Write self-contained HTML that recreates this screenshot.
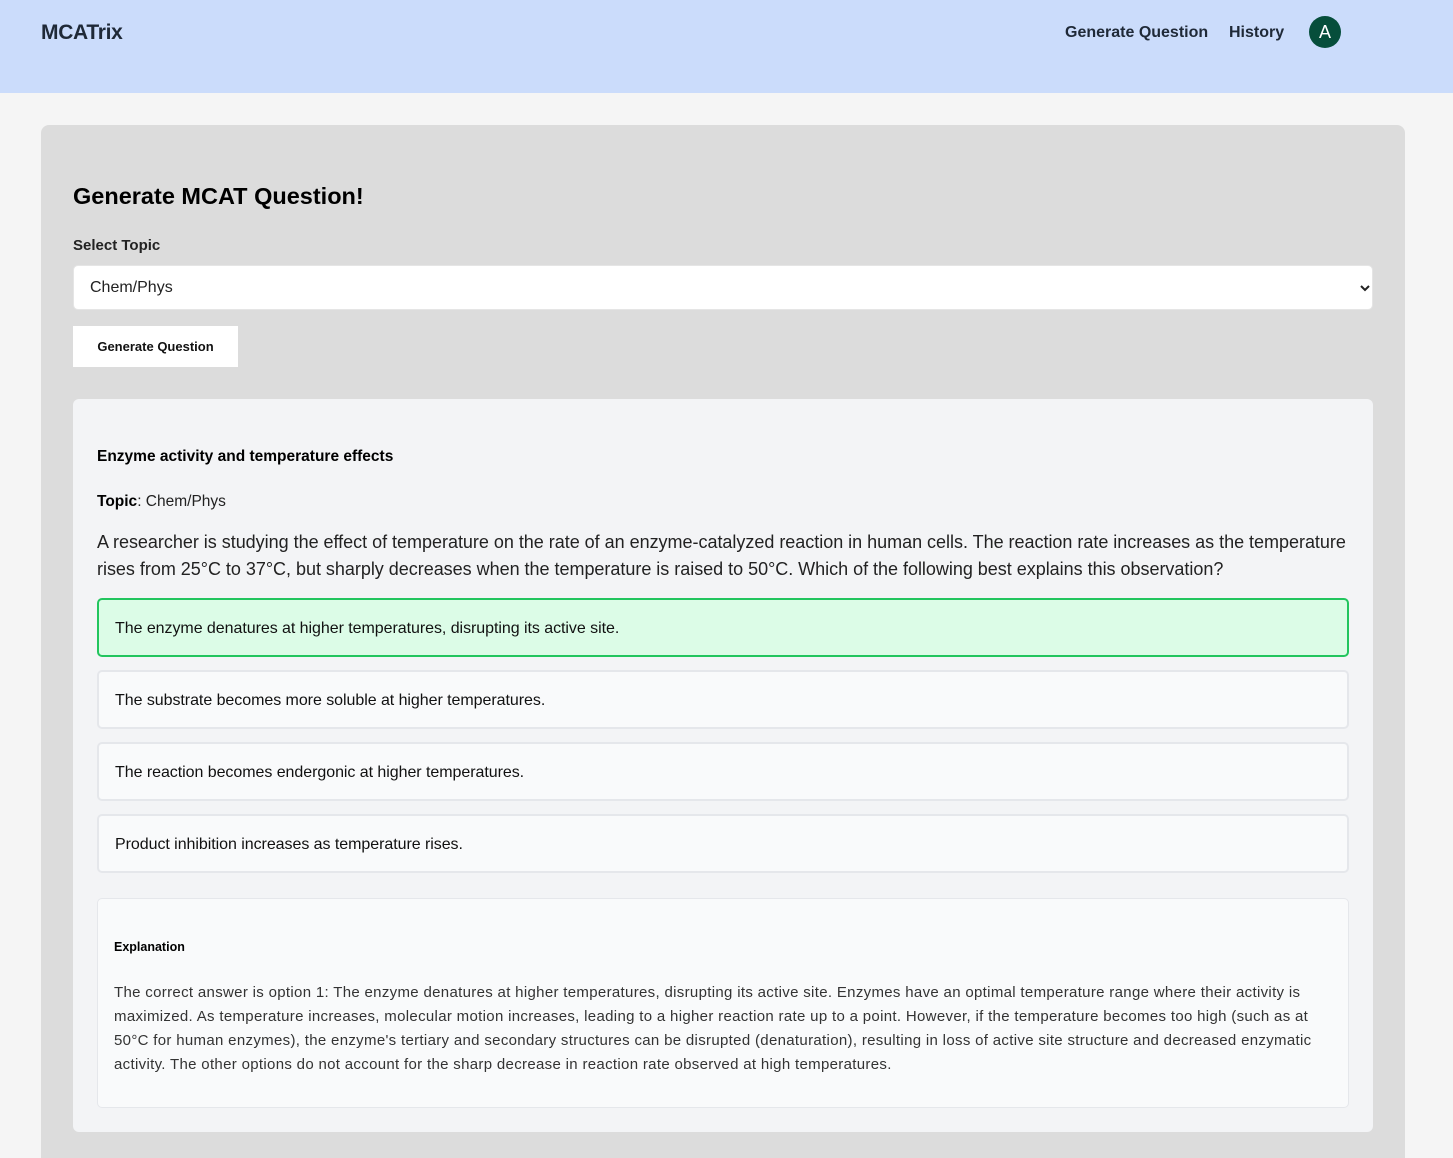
<!DOCTYPE html>
<html><head><meta charset="utf-8"><style>
*{box-sizing:border-box;margin:0;padding:0}
html,body{width:1453px;height:1158px;overflow:hidden}
body{background:#f5f5f5;font-family:"Liberation Sans",sans-serif;color:#111;position:relative}
.hdr{position:absolute;left:0;top:0;width:1453px;height:93px;background:#cbdcfb}
.logo{position:absolute;left:41px;top:21px;font-size:21px;font-weight:bold;color:#1f2937;letter-spacing:-0.3px}
.nav{position:absolute;top:24px;font-size:16px;font-weight:bold;color:#1f2937}
.av{position:absolute;left:1309px;top:16px;width:32px;height:32px;border-radius:50%;background:#064e3b;color:#fff;font-size:18px;text-align:center;line-height:32px}
.card{position:absolute;left:41px;top:125px;width:1364px;height:1033px;background:#dcdcdc;border-radius:8px 8px 0 0}
.abs{position:absolute;white-space:nowrap}
.sel{position:absolute;left:73px;top:265px;width:1300px;height:45px;background:#fff;border-radius:5px;border:1px solid #e5e5e5}
.btn{position:absolute;left:73px;top:326px;width:165px;height:41px;background:#fff;font-size:13px;font-weight:bold;text-align:center;line-height:42px}
.inner{position:absolute;left:73px;top:399px;width:1300px;height:733px;background:#f3f4f6;border-radius:6px}
.opt{position:absolute;left:97px;width:1252px;height:59px;background:#f9fafb;border:2px solid #e5e7eb;border-radius:5px;font-size:16px;padding-left:16px;line-height:58px;white-space:nowrap;letter-spacing:-0.05px}
.ok{background:#dcfce7;border-color:#22c55e}
.exp{position:absolute;left:97px;top:898px;width:1252px;height:210px;background:#f9fafb;border:1px solid #e5e7eb;border-radius:5px}
</style></head><body>
<div class="hdr">
<div class="logo">MCATrix</div>
<div class="nav" style="left:1065px">Generate Question</div>
<div class="nav" style="left:1229px">History</div>
<div class="av">A</div>
</div>
<div class="card"></div>
<div class="abs" style="left:73px;top:183px;font-size:23.5px;font-weight:bold;color:#000">Generate MCAT Question!</div>
<div class="abs" style="left:73px;top:237px;font-size:15px;font-weight:bold;color:#222">Select Topic</div>
<div class="sel"><span class="abs" style="left:16px;top:13px;font-size:16px;color:#222">Chem/Phys</span>
<svg class="abs" style="left:1285px;top:17px" width="12" height="10" viewBox="0 0 12 10"><path d="M2 3l4 4 4-4" stroke="#222" stroke-width="2" fill="none"/></svg></div>
<div class="btn">Generate Question</div>
<div class="inner"></div>
<div class="abs" style="left:97px;top:448px;font-size:15.5px;font-weight:bold;color:#000">Enzyme activity and temperature effects</div>
<div class="abs" style="left:97px;top:493px;font-size:15.5px;color:#222"><b style="color:#000">Topic</b>: Chem/Phys</div>
<div class="abs" style="left:97px;top:529px;font-size:18px;line-height:27px;color:#222;letter-spacing:-0.02px">A researcher is studying the effect of temperature on the rate of an enzyme-catalyzed reaction in human cells. The reaction rate increases as the temperature<br>rises from 25°C to 37°C, but sharply decreases when the temperature is raised to 50°C. Which of the following best explains this observation?</div>
<div class="opt ok" style="top:598px">The enzyme denatures at higher temperatures, disrupting its active site.</div>
<div class="opt" style="top:670px">The substrate becomes more soluble at higher temperatures.</div>
<div class="opt" style="top:742px">The reaction becomes endergonic at higher temperatures.</div>
<div class="opt" style="top:814px">Product inhibition increases as temperature rises.</div>
<div class="exp"></div>
<div class="abs" style="left:114px;top:940px;font-size:12.5px;font-weight:bold;color:#000">Explanation</div>
<div class="abs" style="left:114px;top:981px;font-size:15px;line-height:24px;color:#333;letter-spacing:0.32px">The correct answer is option 1: The enzyme denatures at higher temperatures, disrupting its active site. Enzymes have an optimal temperature range where their activity is<br>maximized. As temperature increases, molecular motion increases, leading to a higher reaction rate up to a point. However, if the temperature becomes too high (such as at<br>50°C for human enzymes), the enzyme's tertiary and secondary structures can be disrupted (denaturation), resulting in loss of active site structure and decreased enzymatic<br>activity. The other options do not account for the sharp decrease in reaction rate observed at high temperatures.</div>
</body></html>
